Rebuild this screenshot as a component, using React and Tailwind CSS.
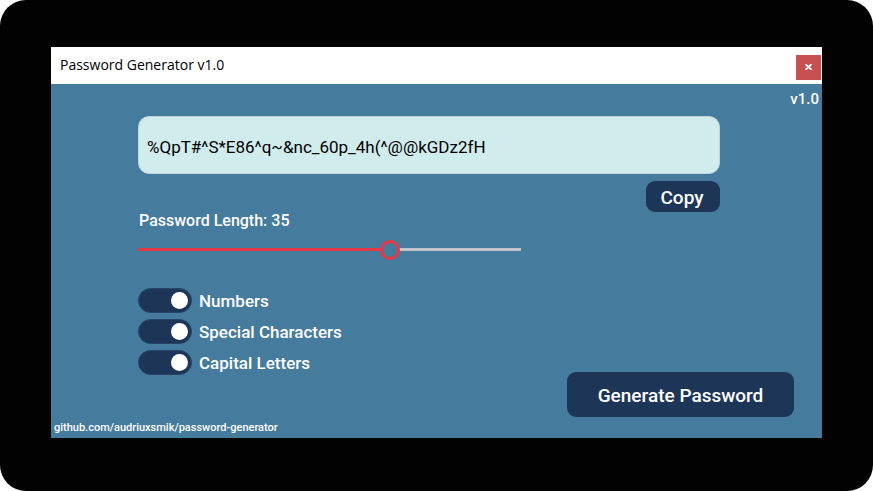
import { useState } from "react";

const MIN_LENGTH = 5;
const MAX_LENGTH = 50;

function Toggle({ id, label, checked, onChange }) {
  return (
    <label htmlFor={id} className="flex h-[25px] cursor-pointer items-center gap-[7px]">
      <input
        id={id}
        type="checkbox"
        checked={checked}
        onChange={(event) => onChange(event.target.checked)}
        className="h-[25px] w-[54px] shrink-0 cursor-pointer appearance-none rounded-full border border-[#25456a] bg-[#1d3557] p-[3px] before:block before:size-[17px] before:rounded-full before:bg-white checked:before:ml-[29px]"
      />
      <span className="text-[17px] leading-6 font-medium whitespace-nowrap">{label}</span>
    </label>
  );
}

export default function App() {
  const [length, setLength] = useState(35);
  const [options, setOptions] = useState({ numbers: true, special: true, capitals: true });
  const [password, setPassword] = useState("%QpT#^S*E86^q~&nc_60p_4h(^@@kGDz2fH");

  const percent = ((length - MIN_LENGTH) / (MAX_LENGTH - MIN_LENGTH)) * 100;
  const setOption = (key) => (value) => setOptions({ ...options, [key]: value });

  const generate = () => {
    let chars = "abcdefghijklmnopqrstuvwxyz";
    if (options.numbers) chars += "0123456789";
    if (options.special) chars += "!@#$%^&*()_~";
    if (options.capitals) chars += "ABCDEFGHIJKLMNOPQRSTUVWXYZ";
    setPassword(
      Array.from({ length }, () => chars[Math.floor(Math.random() * chars.length)]).join("")
    );
  };

  return (
    <div className="flex min-h-screen flex-col rounded-[26px] bg-[#020202] pt-[47px] pr-[51px] pb-[53px] pl-[51px] font-[Bahnschrift,Roboto,sans-serif] text-white">
      <div className="flex flex-1 flex-col bg-[#457b9d]">
        <header className="flex h-[37px] items-center justify-between bg-white pr-px pb-px pl-[9px]">
          <h1 className="font-['Segoe_UI','Open_Sans',sans-serif] text-[14px] leading-6 text-black">
            Password Generator v1.0
          </h1>
          <button
            type="button"
            aria-label="Close"
            className="mt-1 flex size-[25px] items-center justify-center bg-[#c75050]"
          >
            <svg viewBox="0 0 7 6" className="h-[6px] w-[7px]" fill="none" stroke="white" strokeWidth="1.7">
              <path d="M0.5 0.2 L6.5 5.8 M6.5 0.2 L0.5 5.8" />
            </svg>
          </button>
        </header>

        <main className="flex flex-1 flex-col">
          <p className="h-8 pr-[3px] text-right text-[15px] leading-[30px] font-medium">v1.0</p>

          <div className="pr-[102px] pl-[87px]">
            <input
              type="text"
              readOnly
              aria-label="Generated password"
              value={password}
              className="block h-[58px] w-full rounded-[11px] border border-[#c3d3dc] bg-[#d1ecec] px-2 pt-[3px] text-[17px] text-black outline-none"
            />
            <div className="flex items-start justify-between pt-[7px]">
              <label htmlFor="length" className="pt-7 pl-px text-[16px] leading-6 font-medium">
                Password Length: {length}
              </label>
              <button
                type="button"
                onClick={() => navigator.clipboard?.writeText(password)}
                className="flex h-[31px] w-[74px] items-center justify-center rounded-[9px] bg-[#1d3557] pt-[3px] pr-[2px] text-[19px] leading-6 font-medium"
              >
                Copy
              </button>
            </div>
            <input
              id="length"
              type="range"
              min={MIN_LENGTH}
              max={MAX_LENGTH}
              value={length}
              onChange={(event) => setLength(Number(event.target.value))}
              style={{
                backgroundImage: `linear-gradient(to right, #e63946 ${percent}%, #c4c6cf ${percent}%)`,
              }}
              className="mt-[7px] block h-5 w-[383px] max-w-full cursor-pointer appearance-none bg-[length:100%_3px] bg-[position:0_8px] bg-no-repeat outline-none [&::-webkit-slider-thumb]:size-5 [&::-webkit-slider-thumb]:appearance-none [&::-webkit-slider-thumb]:rounded-full [&::-webkit-slider-thumb]:border-3 [&::-webkit-slider-thumb]:border-[#e63946] [&::-webkit-slider-thumb]:bg-[#457b9d]"
            />
          </div>

          <div className="mt-7 flex flex-1 items-end justify-between pr-7 pl-[87px]">
            <div className="flex flex-col gap-[6px] self-start">
              <Toggle id="numbers" label="Numbers" checked={options.numbers} onChange={setOption("numbers")} />
              <Toggle id="special" label="Special Characters" checked={options.special} onChange={setOption("special")} />
              <Toggle id="capitals" label="Capital Letters" checked={options.capitals} onChange={setOption("capitals")} />
            </div>
            <button
              type="button"
              onClick={generate}
              className="flex h-[45px] w-[227px] items-center justify-center rounded-[9px] bg-[#1d3557] pt-[2px] text-[19px] leading-6 font-medium"
            >
              Generate Password
            </button>
          </div>

          <footer className="h-[21px] pl-[3px] text-[11px] leading-[22px] font-medium">
            <a href="https://github.com/audriuxsmik/password-generator">
              github.com/audriuxsmik/password-generator
            </a>
          </footer>
        </main>
      </div>
    </div>
  );
}
